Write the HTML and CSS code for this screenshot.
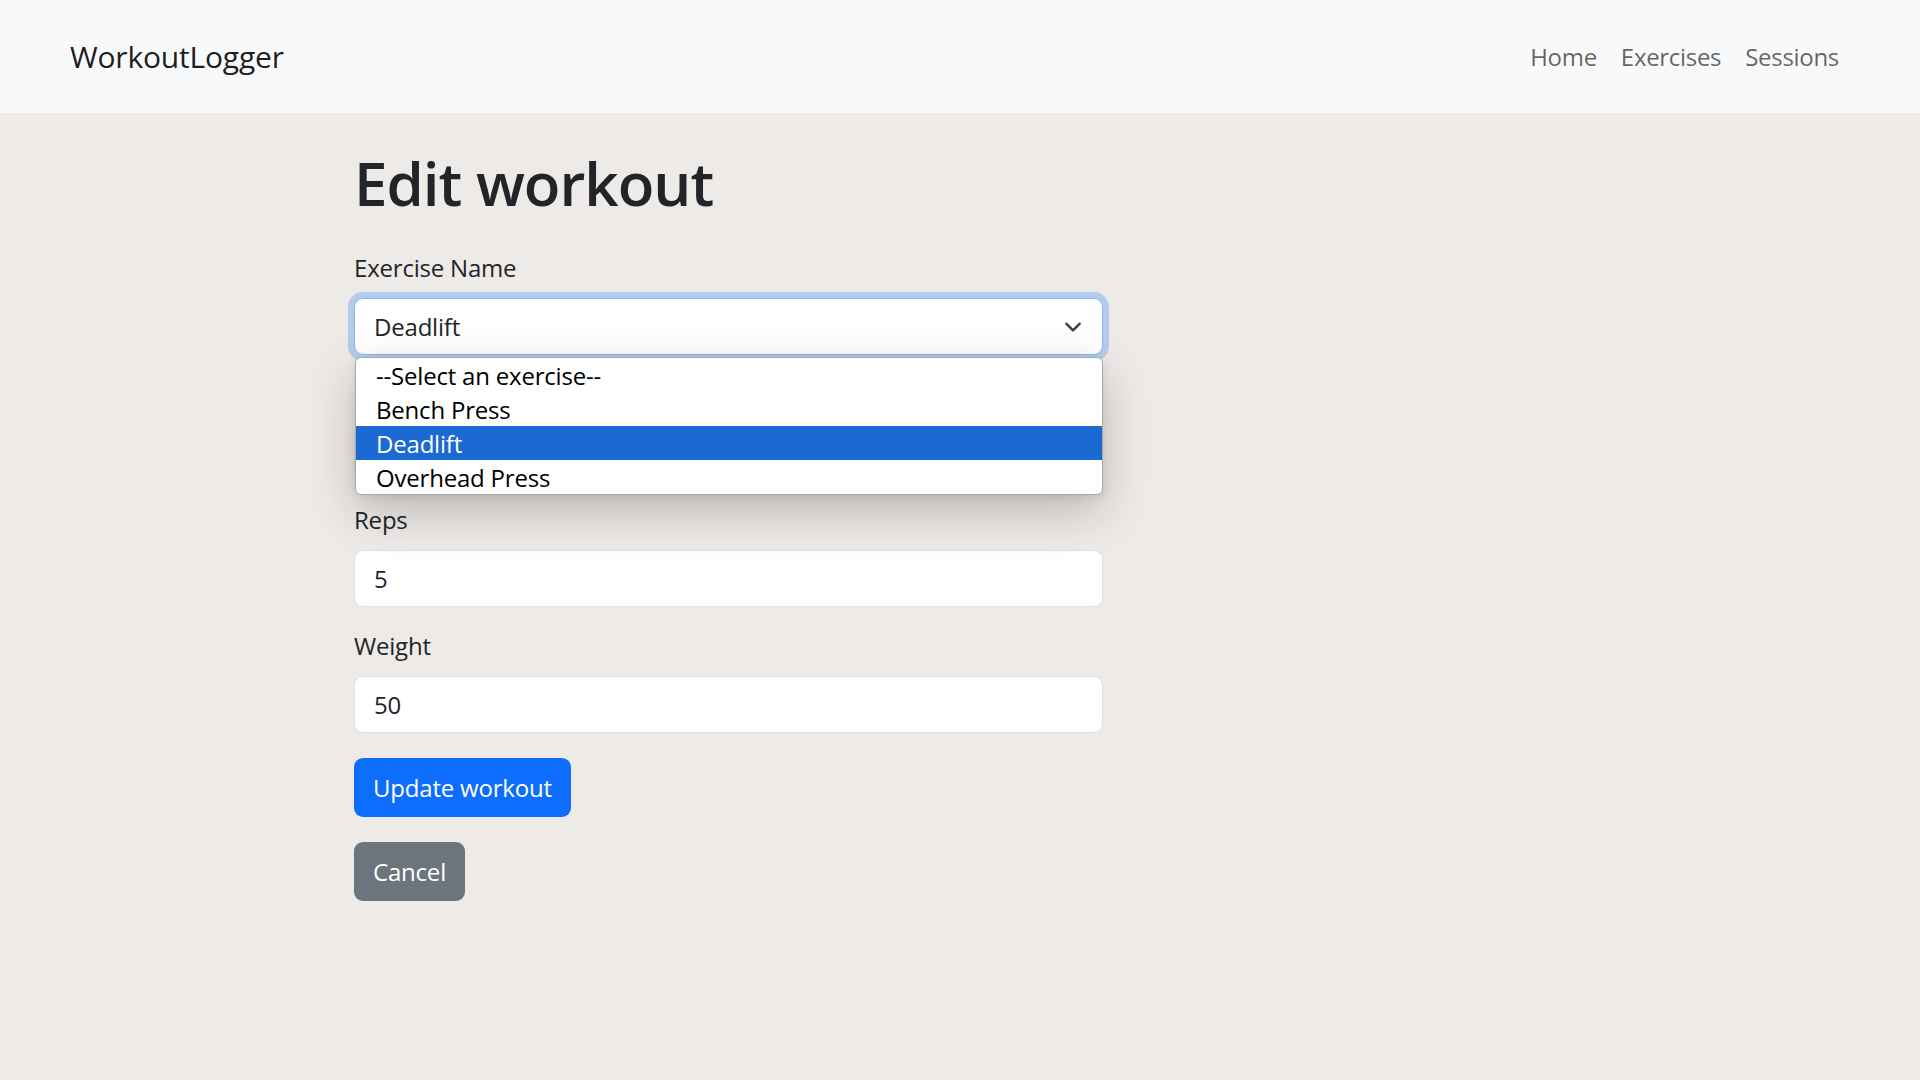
FILE: index.html
```html
<!DOCTYPE html>
<html lang="en">
<head>
<meta charset="utf-8">
<title>Edit workout - WorkoutLogger</title>
<link rel="stylesheet" href="styles.css">
</head>
<body>
<nav class="navbar">
  <a class="brand" href="#">WorkoutLogger</a>
  <ul class="nav">
    <li><a class="nav-link" href="#">Home</a></li>
    <li><a class="nav-link" href="#">Exercises</a></li>
    <li><a class="nav-link" href="#">Sessions</a></li>
  </ul>
</nav>
<main class="content">
  <h1 class="title">Edit workout</h1>
  <form class="form">
    <div class="group">
      <label class="label">Exercise Name</label>
      <div class="select-wrap">
        <div class="select">
          <span>Deadlift</span>
          <svg class="chevron" viewBox="0 0 16 16" width="18" height="18"><path d="M2 5l6 6 6-6" fill="none" stroke="#343a40" stroke-width="2" stroke-linecap="round" stroke-linejoin="round"/></svg>
        </div>
        <ul class="dropdown">
          <li class="option">--Select an exercise--</li>
          <li class="option">Bench Press</li>
          <li class="option selected">Deadlift</li>
          <li class="option">Overhead Press</li>
        </ul>
      </div>
    </div>
    <div class="group">
      <div class="label label-hidden"></div>
      <div class="input"></div>
    </div>
    <div class="group">
      <label class="label">Reps</label>
      <div class="input">5</div>
    </div>
    <div class="group group-last">
      <label class="label">Weight</label>
      <div class="input">50</div>
    </div>
    <div class="actions">
      <button class="btn btn-primary" type="button">Update workout</button>
    </div>
  </form>
  <a class="btn btn-secondary" href="#">Cancel</a>
</main>
</body>
</html>
```
FILE: styles.css
```css
* { box-sizing: border-box; }
html, body { margin: 0; padding: 0; }
body {
  background: #eeeae7;
  font-family: "Open Sans", "Noto Sans", sans-serif;
  font-size: 24px;
  line-height: 36px;
  letter-spacing: -0.2px;
  color: #212529;
  min-height: 1080px;
}
.navbar {
  height: 113px;
  background: #f8f9fa;
  display: flex;
  align-items: center;
  justify-content: space-between;
  padding: 0 69px 0 70px;
}
.brand {
  font-size: 30px;
  line-height: 45px;
  color: rgba(0,0,0,.9);
  text-decoration: none;
}
.nav {
  display: flex;
  list-style: none;
  margin: 0;
  padding: 0;
}
.nav-link {
  display: block;
  padding: 0 12px;
  color: rgba(0,0,0,.62);
  text-decoration: none;
  letter-spacing: -0.3px;
}
.content {
  width: 749px;
  margin-left: 354px;
}
.title {
  font-size: 60px;
  font-weight: 600;
  line-height: 72px;
  margin: 34px 0 31px;
  letter-spacing: -1px;
}
.form { margin: 0; }
.group { margin-bottom: 21px; }
.group-last { margin-bottom: 25px; }
.label {
  display: block;
  margin-bottom: 12px;
}
.label-hidden { height: 36px; }
.select-wrap { position: relative; }
.select {
  height: 57px;
  background: #fff;
  border: 1px solid #86b7fe;
  border-radius: 9px;
  box-shadow: 0 0 0 6px #b5cbed;
  padding: 0 20px 0 19px;
  display: flex;
  align-items: center;
  justify-content: space-between;
}
.input {
  height: 57px;
  background: #fff;
  border: 1px solid #dde0e4;
  border-radius: 9px;
  padding: 0 19px;
  display: flex;
  align-items: center;
}
.dropdown {
  position: absolute;
  top: 59px;
  left: 1px;
  width: 748px;
  margin: 0;
  padding: 0;
  list-style: none;
  background: #fff;
  border: 1px solid #a8a8a8;
  border-radius: 6px;
  box-shadow: 0 16px 48px rgba(0,0,0,.22), 0 3px 8px rgba(0,0,0,.08);
  overflow: hidden;
  z-index: 10;
  color: #000;
}
.option {
  height: 34px;
  line-height: 35px;
  padding-left: 20px;
}
.option.selected {
  background: #1b69d3;
  color: #fff;
}
.actions { margin-bottom: 25px; }
.btn {
  display: inline-flex;
  align-items: center;
  height: 59px;
  padding: 0 19px;
  border: 0;
  border-radius: 9px;
  font-family: inherit;
  font-size: 24px;
  letter-spacing: -0.2px;
  color: #fff;
  text-decoration: none;
}
.btn-primary { background: #0d6efd; }
.btn-secondary { background: #6c757d; }
```
